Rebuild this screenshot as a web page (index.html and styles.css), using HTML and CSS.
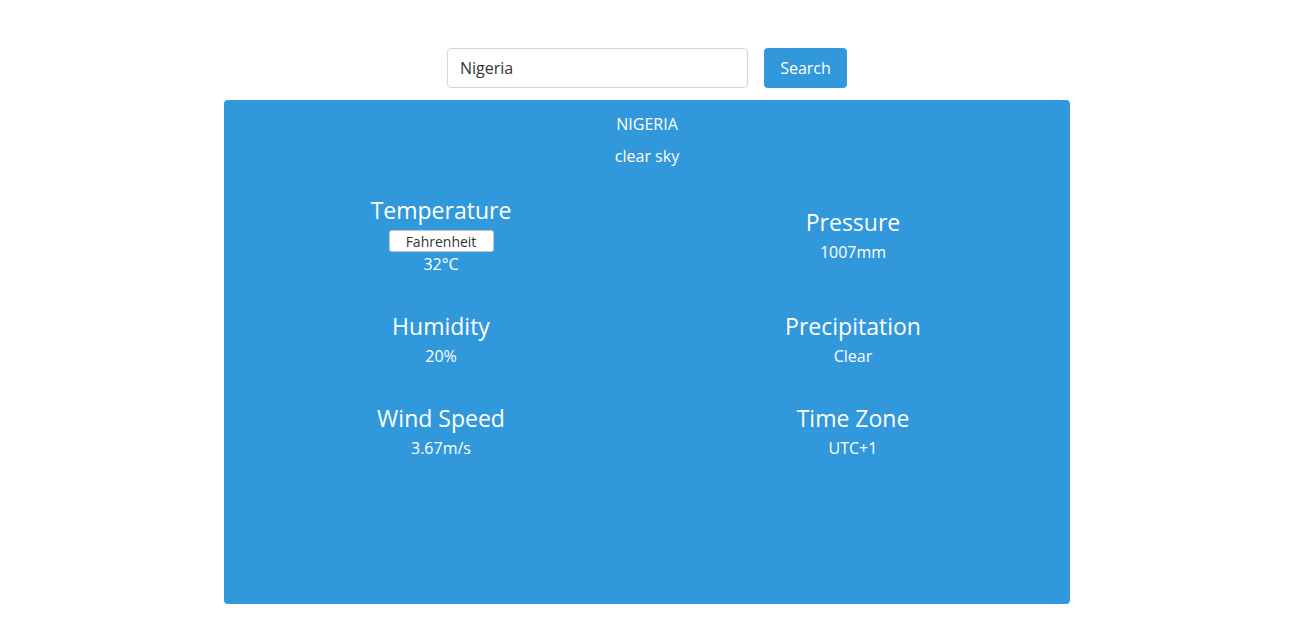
FILE: index.html
```html
<!DOCTYPE html>
<html lang="en">
<head>
<meta charset="utf-8">
<title>Weather</title>
<link rel="stylesheet" href="styles.css">
</head>
<body>
  <div class="search">
    <input class="search-input" type="text" value="Nigeria">
    <button class="search-btn">Search</button>
  </div>
  <div class="card">
    <div class="card-head">
      <div class="country">NIGERIA</div>
      <div class="desc">clear sky</div>
    </div>
    <div class="grid">
      <div class="item">
        <div class="title">Temperature</div>
        <button class="unit-btn">Fahrenheit</button>
        <div class="value">32°C</div>
      </div>
      <div class="item">
        <div class="title">Pressure</div>
        <div class="value">1007mm</div>
      </div>
      <div class="item">
        <div class="title">Humidity</div>
        <div class="value">20%</div>
      </div>
      <div class="item">
        <div class="title">Precipitation</div>
        <div class="value">Clear</div>
      </div>
      <div class="item">
        <div class="title">Wind Speed</div>
        <div class="value">3.67m/s</div>
      </div>
      <div class="item">
        <div class="title">Time Zone</div>
        <div class="value">UTC+1</div>
      </div>
    </div>
  </div>
</body>
</html>
```
FILE: styles.css
```css
* { box-sizing: border-box; }
body {
  margin: 0;
  padding-top: 48px;
  font-family: "Open Sans", "Noto Sans", sans-serif;
  background: #fff;
}
.search {
  display: flex;
  justify-content: center;
  gap: 16px;
}
.search-input {
  width: 301px;
  height: 40px;
  border: 1px solid #d6d6d6;
  border-radius: 4px;
  padding: 0 12px;
  font-family: inherit;
  font-size: 16px;
  color: #333;
  outline: none;
}
.search-btn {
  width: 83px;
  height: 40px;
  border: none;
  border-radius: 4px;
  background: #3298dc;
  color: #fff;
  font-family: inherit;
  font-size: 16px;
}
.card {
  width: 846px;
  height: 504px;
  margin: 12px auto 0;
  background: #3298dc;
  border-radius: 4px;
  color: #fff;
  padding: 12px 11px 0;
}
.card-head {
  display: flex;
  flex-direction: column;
  align-items: center;
  gap: 8px;
  font-size: 16px;
  line-height: 24px;
}
.grid {
  margin-top: 24px;
  display: grid;
  grid-template-columns: 1fr 1fr;
  row-gap: 32px;
  align-items: center;
}
.item {
  display: flex;
  flex-direction: column;
  align-items: center;
}
.title {
  font-size: 23px;
  line-height: 36px;
}
.value {
  font-size: 16px;
  line-height: 24px;
}
.unit-btn {
  margin-top: 2px;
  width: 105px;
  height: 22px;
  background: #fff;
  border: 1px solid #c8c8c8;
  border-radius: 3px;
  font-family: inherit;
  font-size: 14px;
  color: #333;
  padding: 0;
}
```
